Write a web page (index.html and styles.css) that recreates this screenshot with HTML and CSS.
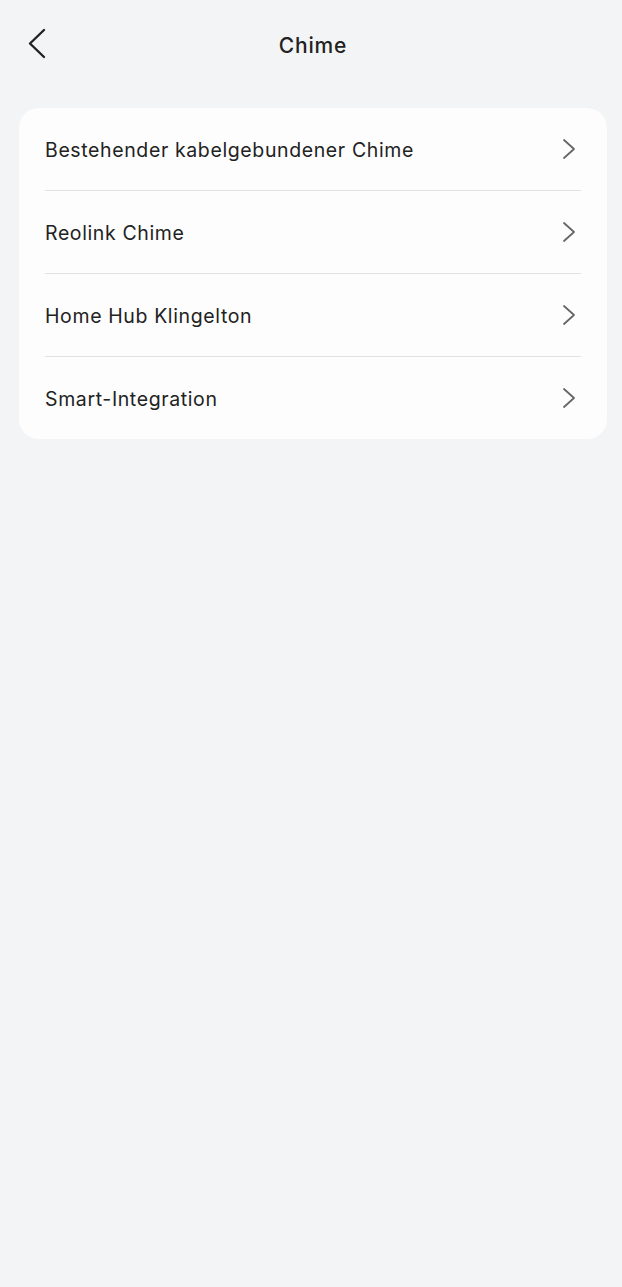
FILE: index.html
```html
<!DOCTYPE html>
<html lang="de">
<head>
    <meta charset="UTF-8">
    <meta name="viewport" content="width=device-width, initial-scale=1.0">
    <title>Chime</title>
    <link rel="stylesheet" href="styles.css">
</head>
<body>
    <header class="topbar">
        <a class="back" href="#" aria-label="Zurück">
            <svg width="20" height="31" viewBox="0 0 20 31">
                <path d="M17 2 L3 15.5 L17 29" fill="none" stroke="#222" stroke-width="2.4" stroke-linecap="round" stroke-linejoin="round"/>
            </svg>
        </a>
        <h1 class="title">Chime</h1>
    </header>

    <ul class="menu">
        <li class="item">
            <span class="label">Bestehender kabelgebundener Chime</span>
            <svg class="chev" width="14" height="22" viewBox="0 0 14 22"><path d="M2 2 L12 11 L2 20" fill="none" stroke="#666" stroke-width="1.8" stroke-linecap="round" stroke-linejoin="round"/></svg>
        </li>
        <li class="item">
            <span class="label">Reolink Chime</span>
            <svg class="chev" width="14" height="22" viewBox="0 0 14 22"><path d="M2 2 L12 11 L2 20" fill="none" stroke="#666" stroke-width="1.8" stroke-linecap="round" stroke-linejoin="round"/></svg>
        </li>
        <li class="item">
            <span class="label">Home Hub Klingelton</span>
            <svg class="chev" width="14" height="22" viewBox="0 0 14 22"><path d="M2 2 L12 11 L2 20" fill="none" stroke="#666" stroke-width="1.8" stroke-linecap="round" stroke-linejoin="round"/></svg>
        </li>
        <li class="item">
            <span class="label">Smart-Integration</span>
            <svg class="chev" width="14" height="22" viewBox="0 0 14 22"><path d="M2 2 L12 11 L2 20" fill="none" stroke="#666" stroke-width="1.8" stroke-linecap="round" stroke-linejoin="round"/></svg>
        </li>
    </ul>
</body>
</html>
```

FILE: styles.css
```css
body {
    margin: 0;
    background: #f3f4f6;
    color: #222;
    font-family: Inter, "Noto Sans", sans-serif;
    min-height: 1287px;
}

.topbar {
    height: 90px;
    display: flex;
    align-items: center;
    justify-content: center;
    position: relative;
    padding-left: 4px;
}

.back {
    position: absolute;
    left: 27px;
    top: 28px;
    display: flex;
}

.title {
    margin: 0;
    font-size: 21px;
    font-weight: 500;
    letter-spacing: 0.8px;
    color: #222;
}

.menu {
    list-style: none;
    margin: 18px 15px 0 19px;
    padding: 0 26px;
    background: #fdfdfd;
    border-radius: 20px;
}

.item {
    height: 82px;
    display: flex;
    align-items: center;
    justify-content: space-between;
    border-bottom: 1px solid #e2e2e4;
}

.item:last-child {
    border-bottom: none;
}

.label {
    font-size: 19.5px;
    letter-spacing: 0.62px;
    color: #222;
    padding-top: 2px;
}

.chev {
    margin-right: 5px;
}
```
